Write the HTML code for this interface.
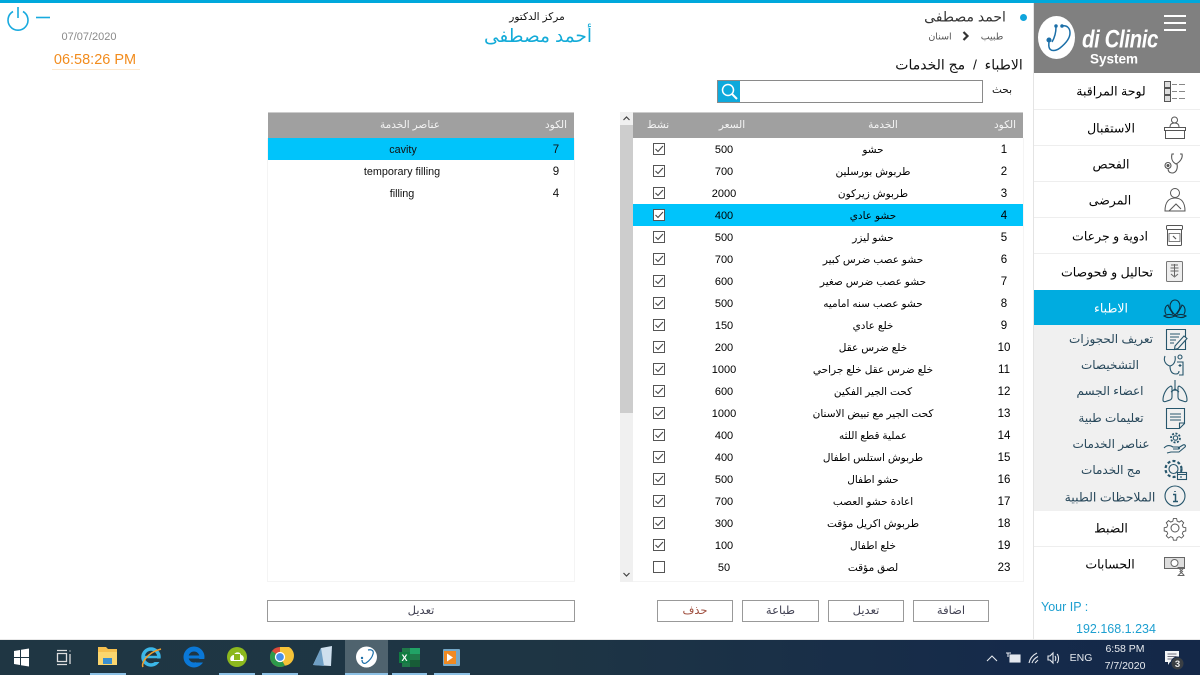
<!DOCTYPE html>
<html lang="ar"><head><meta charset="utf-8"><title>di Clinic System</title>
<style>
html,body{margin:0;padding:0;width:1200px;height:675px;overflow:hidden;background:#fff;font-family:"Liberation Sans","DejaVu Sans",sans-serif;color:#111}
.a{position:absolute}
.t{position:absolute;white-space:nowrap;text-align:center;transform:translate(-50%,-50%)}
.hd{background:#a0a0a0;color:#f4f4f4;font-size:10.5px}
.r{position:absolute;left:633px;width:390px;height:22px;font-size:10.5px;color:#000}
.r span{position:absolute;top:12px;transform:translate(-50%,-50%);white-space:nowrap}
.r .c{left:371px;font-size:11.500px}.r .n{left:240px}.r .p{left:91px;font-size:11px}
.r i{position:absolute;left:20px;top:5px;width:10px;height:10px;border:1px solid #555;background:#fff;box-sizing:content-box}
.r i svg{position:absolute;left:0;top:0}
.btn{position:absolute;top:600px;height:22px;border:1.500px solid #999;background:#fff;font-size:11.500px;text-align:center;line-height:20px;color:#445;box-sizing:border-box}
.m{font-size:12.500px;color:#000}
.s{font-size:12px;color:#27475a}
.sl{position:absolute;left:1034px;width:166px;height:1px;background:#eee}
</style></head><body>
<div class="a" style="left:0;top:0;width:1200px;height:3px;background:#00a8dc"></div>
<div class="a" style="left:1033px;top:3px;width:1px;height:637px;background:#e4e4e4"></div>

<svg class="a" style="left:5px;top:6px" width="46" height="26" fill="none" stroke="#18aade" stroke-width="1.600"><path d="M8 5.500a10 10 0 1 0 10 0"/><path d="M13 1v11"/><path d="M31 11.500h14"/></svg>
<div class="t" style="left:89px;top:37px;font-size:11px;color:#8a8a8a">07/07/2020</div>
<div class="t" style="left:95px;top:60px;font-size:14.500px;color:#f28c1e">06:58:26 PM</div>
<div class="a" style="left:52px;top:69px;width:88px;height:1px;background:#fde9cf"></div>

<div class="t" style="left:537px;top:17px;font-size:10.500px;color:#111" dir="rtl">مركز الدكتور</div>
<div class="t" style="left:538px;top:36px;font-size:18.500px;color:#13abd8" dir="rtl">أحمد مصطفى</div>
<div class="a" style="left:1020px;top:14px;width:7px;height:7px;border-radius:50%;background:#0fa5dc"></div>
<div class="t" style="left:965px;top:17px;font-size:14px;color:#333" dir="rtl">احمد مصطفى</div>
<div class="t" style="left:992px;top:37px;font-size:9.500px;color:#555" dir="rtl">طبيب</div>
<svg class="a" style="left:961px;top:31px" width="10" height="10" fill="none" stroke="#333" stroke-width="2.200"><path d="M2.500 1l4 4-4 4"/></svg>
<div class="t" style="left:940px;top:37px;font-size:9.500px;color:#555" dir="rtl">اسنان</div>
<div class="t" style="left:959px;top:65px;font-size:14px;color:#111" dir="rtl">الاطباء &nbsp;/&nbsp; مج الخدمات</div>

<div class="a" style="left:717px;top:80px;width:266px;height:23px;border:1px solid #8a8a8a;box-sizing:border-box;background:#fff"></div>
<div class="a" style="left:718px;top:81px;width:22px;height:21px;background:#0ea9dc"></div>
<svg class="a" style="left:718px;top:81px" width="22" height="21" fill="none" stroke="#fff" stroke-width="1.500"><circle cx="10" cy="9" r="5.500"/><path d="M14 13l5 5" stroke-width="2"/></svg>
<div class="t" style="left:1002px;top:90px;font-size:10.500px" dir="rtl">بحث</div>

<!-- left table -->
<div class="a hd" style="left:268px;top:112px;width:306px;height:26px;border-top:1px solid #ccc;box-sizing:border-box"></div>
<div class="t hd" style="left:410px;top:125px;background:none" dir="rtl">عناصر الخدمة</div>
<div class="t hd" style="left:556px;top:125px;background:none" dir="rtl">الكود</div>
<div class="a" style="left:268px;top:138px;width:306px;height:22px;background:#00c4fb"></div>
<div class="t" style="left:403px;top:150px;font-size:10.800px">cavity</div><div class="t" style="left:556px;top:150px;font-size:11.500px">7</div>
<div class="t" style="left:402px;top:172px;font-size:10.800px">temporary filling</div><div class="t" style="left:556px;top:172px;font-size:11.500px">9</div>
<div class="t" style="left:402px;top:194px;font-size:10.800px">filling</div><div class="t" style="left:556px;top:194px;font-size:11.500px">4</div>
<div class="a" style="left:267px;top:138px;width:1px;height:444px;background:#f4f4f4"></div>
<div class="a" style="left:574px;top:138px;width:1px;height:444px;background:#f4f4f4"></div>
<div class="a" style="left:267px;top:581px;width:308px;height:1px;background:#f4f4f4"></div>

<!-- scrollbar -->
<div class="a" style="left:620px;top:112px;width:13px;height:470px;background:#f0f0f0"></div>
<div class="a" style="left:620px;top:125px;width:13px;height:288px;background:#cdcdcd"></div>
<svg class="a" style="left:620px;top:112px" width="13" height="470" fill="none" stroke="#444" stroke-width="1.200"><path d="M3.500 8L6.500 5l3 3"/><path d="M3.500 461l3 3 3-3"/></svg>

<!-- right table -->
<div class="a hd" style="left:633px;top:112px;width:390px;height:26px;border-top:1px solid #ccc;box-sizing:border-box"></div>
<div class="t hd" style="left:658px;top:125px;background:none" dir="rtl">نشط</div>
<div class="t hd" style="left:732px;top:125px;background:none" dir="rtl">السعر</div>
<div class="t hd" style="left:883px;top:125px;background:none" dir="rtl">الخدمة</div>
<div class="t hd" style="left:1005px;top:125px;background:none" dir="rtl">الكود</div>
<div class="a" style="left:633px;top:204px;width:390px;height:22px;background:#00c4fb"></div>
<div class="a" style="left:1023px;top:138px;width:1px;height:444px;background:#f4f4f4"></div>
<div class="a" style="left:633px;top:581px;width:391px;height:1px;background:#f4f4f4"></div>

<div class="r" style="top:138px"><i><svg width="10" height="10" fill="none" stroke="#444" stroke-width="1.100"><path d="M1.500 5l2.500 2.500L9 2"/></svg></i><span class="p">500</span><span class="n" dir="rtl">حشو</span><span class="c">1</span></div>
<div class="r" style="top:160px"><i><svg width="10" height="10" fill="none" stroke="#444" stroke-width="1.100"><path d="M1.500 5l2.500 2.500L9 2"/></svg></i><span class="p">700</span><span class="n" dir="rtl">طربوش بورسلين</span><span class="c">2</span></div>
<div class="r" style="top:182px"><i><svg width="10" height="10" fill="none" stroke="#444" stroke-width="1.100"><path d="M1.500 5l2.500 2.500L9 2"/></svg></i><span class="p">2000</span><span class="n" dir="rtl">طربوش زيركون</span><span class="c">3</span></div>
<div class="r" style="top:204px"><i><svg width="10" height="10" fill="none" stroke="#444" stroke-width="1.100"><path d="M1.500 5l2.500 2.500L9 2"/></svg></i><span class="p">400</span><span class="n" dir="rtl">حشو عادي</span><span class="c">4</span></div>
<div class="r" style="top:226px"><i><svg width="10" height="10" fill="none" stroke="#444" stroke-width="1.100"><path d="M1.500 5l2.500 2.500L9 2"/></svg></i><span class="p">500</span><span class="n" dir="rtl">حشو ليزر</span><span class="c">5</span></div>
<div class="r" style="top:248px"><i><svg width="10" height="10" fill="none" stroke="#444" stroke-width="1.100"><path d="M1.500 5l2.500 2.500L9 2"/></svg></i><span class="p">700</span><span class="n" dir="rtl">حشو عصب ضرس كبير</span><span class="c">6</span></div>
<div class="r" style="top:270px"><i><svg width="10" height="10" fill="none" stroke="#444" stroke-width="1.100"><path d="M1.500 5l2.500 2.500L9 2"/></svg></i><span class="p">600</span><span class="n" dir="rtl">حشو عصب ضرس صغير</span><span class="c">7</span></div>
<div class="r" style="top:292px"><i><svg width="10" height="10" fill="none" stroke="#444" stroke-width="1.100"><path d="M1.500 5l2.500 2.500L9 2"/></svg></i><span class="p">500</span><span class="n" dir="rtl">حشو عصب سنه اماميه</span><span class="c">8</span></div>
<div class="r" style="top:314px"><i><svg width="10" height="10" fill="none" stroke="#444" stroke-width="1.100"><path d="M1.500 5l2.500 2.500L9 2"/></svg></i><span class="p">150</span><span class="n" dir="rtl">خلع عادي</span><span class="c">9</span></div>
<div class="r" style="top:336px"><i><svg width="10" height="10" fill="none" stroke="#444" stroke-width="1.100"><path d="M1.500 5l2.500 2.500L9 2"/></svg></i><span class="p">200</span><span class="n" dir="rtl">خلع ضرس عقل</span><span class="c">10</span></div>
<div class="r" style="top:358px"><i><svg width="10" height="10" fill="none" stroke="#444" stroke-width="1.100"><path d="M1.500 5l2.500 2.500L9 2"/></svg></i><span class="p">1000</span><span class="n" dir="rtl">خلع ضرس عقل خلع جراحي</span><span class="c">11</span></div>
<div class="r" style="top:380px"><i><svg width="10" height="10" fill="none" stroke="#444" stroke-width="1.100"><path d="M1.500 5l2.500 2.500L9 2"/></svg></i><span class="p">600</span><span class="n" dir="rtl">كحت الجير الفكين</span><span class="c">12</span></div>
<div class="r" style="top:402px"><i><svg width="10" height="10" fill="none" stroke="#444" stroke-width="1.100"><path d="M1.500 5l2.500 2.500L9 2"/></svg></i><span class="p">1000</span><span class="n" dir="rtl">كحت الجير مع تبيض الاسنان</span><span class="c">13</span></div>
<div class="r" style="top:424px"><i><svg width="10" height="10" fill="none" stroke="#444" stroke-width="1.100"><path d="M1.500 5l2.500 2.500L9 2"/></svg></i><span class="p">400</span><span class="n" dir="rtl">عملية قطع اللثه</span><span class="c">14</span></div>
<div class="r" style="top:446px"><i><svg width="10" height="10" fill="none" stroke="#444" stroke-width="1.100"><path d="M1.500 5l2.500 2.500L9 2"/></svg></i><span class="p">400</span><span class="n" dir="rtl">طربوش استلس اطفال</span><span class="c">15</span></div>
<div class="r" style="top:468px"><i><svg width="10" height="10" fill="none" stroke="#444" stroke-width="1.100"><path d="M1.500 5l2.500 2.500L9 2"/></svg></i><span class="p">500</span><span class="n" dir="rtl">حشو اطفال</span><span class="c">16</span></div>
<div class="r" style="top:490px"><i><svg width="10" height="10" fill="none" stroke="#444" stroke-width="1.100"><path d="M1.500 5l2.500 2.500L9 2"/></svg></i><span class="p">700</span><span class="n" dir="rtl">اعادة حشو العصب</span><span class="c">17</span></div>
<div class="r" style="top:512px"><i><svg width="10" height="10" fill="none" stroke="#444" stroke-width="1.100"><path d="M1.500 5l2.500 2.500L9 2"/></svg></i><span class="p">300</span><span class="n" dir="rtl">طربوش اكريل مؤقت</span><span class="c">18</span></div>
<div class="r" style="top:534px"><i><svg width="10" height="10" fill="none" stroke="#444" stroke-width="1.100"><path d="M1.500 5l2.500 2.500L9 2"/></svg></i><span class="p">100</span><span class="n" dir="rtl">خلع اطفال</span><span class="c">19</span></div>
<div class="r" style="top:556px"><i></i><span class="p">50</span><span class="n" dir="rtl">لصق مؤقت</span><span class="c">23</span></div>

<!-- buttons -->
<div class="btn" style="left:267px;width:308px" dir="rtl">تعديل</div>
<div class="btn" style="left:657px;width:76px;color:#a05040" dir="rtl">حذف</div>
<div class="btn" style="left:742px;width:77px" dir="rtl">طباعة</div>
<div class="btn" style="left:828px;width:76px" dir="rtl">تعديل</div>
<div class="btn" style="left:913px;width:76px" dir="rtl">اضافة</div>

<!-- sidebar -->
<div class="a" style="left:1034px;top:3px;width:166px;height:70px;background:#808080"></div>
<div class="a" style="left:1038px;top:16px;width:37px;height:43px;border-radius:50%;background:#fff"></div>
<svg class="a" style="left:1038px;top:16px" width="37" height="43" fill="none" stroke="#1b6fa8" stroke-width="1.500"><path d="M24 10c5-1 8 2 8 7 0 6-5 11-10 15-4 3-10 4-11-1-.5-2 0-4 0-6"/><path d="M18 11c0 5-1 10-4 15"/><circle cx="11" cy="24" r="1.800" fill="#1b6fa8"/><circle cx="18" cy="10" r="1" fill="#1b6fa8"/><circle cx="24" cy="10" r="1" fill="#1b6fa8"/></svg>
<div class="t" style="left:1120px;top:40px;font-size:25px;font-weight:bold;font-style:italic;color:#fff;letter-spacing:-.5px;transform:translate(-50%,-50%) scaleX(.82)">di Clinic</div>
<div class="t" style="left:1114px;top:59px;font-size:13.500px;font-weight:bold;color:#fff">System</div>
<div class="a" style="left:1164px;top:15px;width:22px;height:2px;background:#fff"></div>
<div class="a" style="left:1164px;top:22px;width:22px;height:2px;background:#fff"></div>
<div class="a" style="left:1164px;top:29px;width:22px;height:2px;background:#fff"></div>

<div class="t m" style="left:1111px;top:91px" dir="rtl">لوحة المراقبة</div>
<div class="sl" style="top:109px"></div>
<div class="t m" style="left:1111px;top:128px" dir="rtl">الاستقبال</div>
<div class="sl" style="top:145px"></div>
<div class="t m" style="left:1111px;top:164px" dir="rtl">الفحص</div>
<div class="sl" style="top:181px"></div>
<div class="t m" style="left:1110px;top:200px" dir="rtl">المرضى</div>
<div class="sl" style="top:217px"></div>
<div class="t m" style="left:1110px;top:236px" dir="rtl">ادوية و جرعات</div>
<div class="sl" style="top:253px"></div>
<div class="t m" style="left:1107px;top:272px" dir="rtl">تحاليل و فحوصات</div>
<div class="a" style="left:1034px;top:290px;width:166px;height:35px;background:#00ace0"></div>
<div class="t m" style="left:1111px;top:308px;color:#fff" dir="rtl">الاطباء</div>
<div class="a" style="left:1034px;top:325px;width:166px;height:186px;background:#f0f0f0"></div>
<div class="t s" style="left:1111px;top:339px" dir="rtl">تعريف الحجوزات</div>
<div class="t s" style="left:1110px;top:365px" dir="rtl">التشخيصات</div>
<div class="t s" style="left:1110px;top:391px" dir="rtl">اعضاء الجسم</div>
<div class="t s" style="left:1111px;top:418px" dir="rtl">تعليمات طبية</div>
<div class="t s" style="left:1111px;top:444px" dir="rtl">عناصر الخدمات</div>
<div class="t s" style="left:1111px;top:470px" dir="rtl">مج الخدمات</div>
<div class="t s" style="left:1110px;top:497px;font-size:12.500px" dir="rtl">الملاحظات الطبية</div>
<div class="t m" style="left:1111px;top:528px" dir="rtl">الضبط</div>
<div class="sl" style="top:546px"></div>
<div class="t m" style="left:1110px;top:564px" dir="rtl">الحسابات</div>
<div class="a" style="left:1041px;top:600px;font-size:12.500px;color:#1d9fd0">Your IP :</div>
<div class="t" style="left:1116px;top:629px;font-size:12.500px;color:#1d9fd0">192.168.1.234</div>

<!-- sidebar icons -->
<svg class="a" style="left:1160px;top:78px" width="30" height="26" fill="none" stroke="#555" stroke-width="1"><rect x="4.500" y="3.500" width="6" height="6" fill="#ddd"/><rect x="4.500" y="10.500" width="6" height="6" fill="#ddd"/><rect x="4.500" y="17.500" width="6" height="6" fill="#ddd"/><path d="M12 6.500h5M19 6.500h6M12 13.500h5M19 13.500h6M12 20.500h5M19 20.500h6" stroke="#888"/></svg>
<svg class="a" style="left:1160px;top:114px" width="30" height="26" fill="none" stroke="#555" stroke-width="1"><circle cx="14.500" cy="6" r="3"/><path d="M10 13c0-3 2-4 4.500-4s4.500 1 4.500 4"/><path d="M4.500 13.500h21v3h-21zM5.500 16.500v8h19v-8"/></svg>
<svg class="a" style="left:1160px;top:150px" width="30" height="26" fill="none" stroke="#555" stroke-width="1.100"><path d="M14 4h-2c-1 4 0 8 4 10 4-2 7-6 6-10h-2"/><path d="M17 14c1 5-1 9-5 9-3 0-4-2-4-5"/><circle cx="8" cy="15.500" r="3"/><circle cx="8" cy="15.500" r="1" fill="#555"/></svg>
<svg class="a" style="left:1160px;top:186px" width="30" height="26" fill="none" stroke="#555" stroke-width="1"><circle cx="15" cy="7" r="4.500"/><path d="M5 25c0-9 4-13 10-13s10 4 10 13zM9 25l7-7 5 5"/></svg>
<svg class="a" style="left:1160px;top:222px" width="30" height="26" fill="none" stroke="#555" stroke-width="1"><rect x="6.500" y="3.500" width="16" height="4" rx="1"/><rect x="7.500" y="7.500" width="14" height="16" rx="1"/><path d="M9 11.500h11v8H9z" stroke-width=".8"/><path d="M13 14l3 3" stroke-width="1.200"/></svg>
<svg class="a" style="left:1160px;top:258px" width="30" height="26" fill="none" stroke="#777" stroke-width="1"><rect x="6.500" y="3.500" width="16" height="20" rx="1" fill="#eee"/><path d="M11 7h7M10.500 10h8M10.500 13h8M11 16l3.500 3 3.500-3M14.500 6v12" stroke="#666"/></svg>
<svg class="a" style="left:1160px;top:295px" width="30" height="26" fill="none" stroke="#0f2f40" stroke-width="1.100"><path d="M6 19c-2-3-1-8 2-9 1 3 3 6 5 9"/><path d="M24 19c2-3 1-8-2-9-1 3-3 6-5 9"/><path d="M15 5c-3 0-5 3-5 6 0 4 3 7 5 9 2-2 5-5 5-9 0-3-2-6-5-6z"/><path d="M4 21c3-2 7-2 11 0 4-2 8-2 11 0-3 2-7 2-11 0-4 2-8 2-11 0z"/></svg>
<svg class="a" style="left:1160px;top:326px" width="30" height="26" fill="none" stroke="#27566c" stroke-width="1.100"><path d="M6.500 3.500h19v20h-19z"/><path d="M10 8h10M10 11h9M10 14h6M10 17h4"/><path d="M15 20l9-10 3 2.500-9 10-3.500 1z" fill="#f0f0f0"/></svg>
<svg class="a" style="left:1160px;top:352px" width="30" height="26" fill="none" stroke="#27566c" stroke-width="1.100"><path d="M5 4c-2 5 1 9 5 10 4-1 6-5 5-10"/><path d="M10 14c0 5 2 8 6 8 2 0 3-1 3-3"/><circle cx="20" cy="5" r="2"/><path d="M17 10h6v13h-4M20 12v3M18.500 13.500h3"/></svg>
<svg class="a" style="left:1160px;top:378px" width="30" height="26" fill="none" stroke="#27566c" stroke-width="1.100"><path d="M15 2v11M15 11l-4 3M15 11l4 3"/><path d="M11 8c-5 2-8 9-8 14 0 2 2 2 4 1 3-1 5-1 5-4V9zM19 8c5 2 8 9 8 14 0 2-2 2-4 1-3-1-5-1-5-4V9z"/></svg>
<svg class="a" style="left:1160px;top:404px" width="30" height="26" fill="none" stroke="#27566c" stroke-width="1.100"><path d="M6.500 4.500h18v15l-5 5h-13z"/><path d="M10 10h11M10 13h11M10 16h11M19.500 24v-5h5"/></svg>
<svg class="a" style="left:1160px;top:430px" width="30" height="26" fill="none" stroke="#27566c" stroke-width="1.100"><circle cx="15.500" cy="8" r="2.200"/><circle cx="15.500" cy="8" r="4.500" stroke-dasharray="2 1.500" stroke-width="1.800"/><path d="M4 18c3-3 6-3 9-1h5c2 0 2 2 0 2h-5M18 18l5-3c2-1 3 1 2 2l-6 5h-8l-4 1"/></svg>
<svg class="a" style="left:1160px;top:456px" width="30" height="26" fill="none" stroke="#27566c" stroke-width="1.100"><circle cx="13.500" cy="13" r="4.500"/><circle cx="13.500" cy="13" r="8" stroke-dasharray="3 2.200" stroke-width="2.200"/><rect x="17.500" y="16.500" width="9" height="7" fill="#f0f0f0"/><path d="M17.500 18.500h9M21 20v2"/></svg>
<svg class="a" style="left:1160px;top:483px" width="30" height="26" fill="none" stroke="#27566c" stroke-width="1.100"><circle cx="15" cy="13" r="10"/><path d="M15 8v.8" stroke-width="2"/><path d="M13 11.500h2.500v6.500M13 18.500h5" stroke-width="1.500"/></svg>
<svg class="a" style="left:1160px;top:515px" width="30" height="26" fill="none" stroke="#555" stroke-width="1"><circle cx="15" cy="13" r="4"/><path d="M13.200 2.500h3.600l.6 2.900 2.300 1 2.500-1.600 2.500 2.500-1.600 2.500 1 2.300 2.900.6v3.600l-2.900.6-1 2.300 1.600 2.500-2.500 2.500-2.500-1.600-2.300 1-.6 2.900h-3.600l-.6-2.900-2.300-1-2.500 1.600-2.500-2.500 1.600-2.500-1-2.300-2.900-.6v-3.600l2.900-.6 1-2.300-1.600-2.500 2.500-2.500 2.500 1.600 2.300-1z" transform="translate(1.500 1.300) scale(.9)"/></svg>
<svg class="a" style="left:1160px;top:551px" width="30" height="26" fill="none" stroke="#666" stroke-width="1"><rect x="4.500" y="6.500" width="20" height="11" fill="#ddd"/><circle cx="14.500" cy="12" r="3.500" fill="#fff"/><path d="M17.500 16.500h7M18.500 17l4 3.500-4 3.500M24 17l-4 3.500 4 3.500M17.500 24.500h7"/></svg>

<!-- taskbar -->
<div class="a" style="left:0;top:639px;width:1200px;height:1px;background:#e8e8e8"></div>
<div class="a" style="left:0;top:640px;width:1200px;height:35px;background:linear-gradient(90deg,#1f3643 0%,#1e3544 45%,#152a4a 85%,#142848 100%)"></div>
<div class="a" style="left:345px;top:640px;width:43px;height:35px;background:#4f636e"></div>
<div class="a" style="left:90px;top:673px;width:36px;height:2px;background:#8cc0e4"></div>
<div class="a" style="left:219px;top:673px;width:36px;height:2px;background:#8cc0e4"></div>
<div class="a" style="left:262px;top:673px;width:36px;height:2px;background:#8cc0e4"></div>
<div class="a" style="left:345px;top:673px;width:43px;height:2px;background:#8cc0e4"></div>
<div class="a" style="left:392px;top:673px;width:35px;height:2px;background:#8cc0e4"></div>
<div class="a" style="left:434px;top:673px;width:36px;height:2px;background:#8cc0e4"></div>
<svg class="a" style="left:0;top:637px" width="500" height="35">
<path d="M14 14l6-1v7h-6zM21 12.700l8-1.200V20h-8zM14 21h6v7l-6-1zM21 21h8v8.500l-8-1.200z" fill="#fff"/>
<path d="M57 13.500h10M57 27.500h10M57.500 16.500h9v8h-9zM70 13.500v1M70 17v10" fill="none" stroke="#ddd" stroke-width="1.300"/>
<path d="M98 10h8l2 2h9v16H98z" fill="#f6c04f"/><path d="M98 15h19v13H98z" fill="#fbd66e"/><rect x="103" y="21" width="9" height="6" fill="#3a8fd0"/>
<circle cx="151" cy="20" r="8" fill="none" stroke="#3bb7e8" stroke-width="3.500"/><path d="M144 20h14" stroke="#3bb7e8" stroke-width="2.500"/><path d="M143 30c-2-3 3-14 18-18" fill="none" stroke="#f0a030" stroke-width="1.500"/><rect x="152" y="21.500" width="9" height="3.500" fill="#1f3643"/>
<circle cx="194" cy="20" r="8" fill="none" stroke="#0a78d7" stroke-width="5"/><path d="M188 20h14" stroke="#0a78d7" stroke-width="3"/><rect x="196" y="22" width="9" height="3.500" fill="#1f3643"/>
<circle cx="237" cy="20" r="10" fill="#8cb81e"/><path d="M231 24h12c2-3 0-6-2-6 0-3-6-4-7 0-3 0-5 4-3 6z" fill="#fff"/><rect x="234" y="17" width="6" height="6" fill="#8cb81e"/>
<circle cx="280" cy="20" r="10" fill="#dd4b39"/><path d="M280 20l-8.700 5A10 10 0 0 0 285 28.600z" fill="#2c9a4b"/><path d="M280 10h9a10 10 0 0 1-4 18.600L280 20z" fill="#f6c338"/><path d="M271.300 25A10 10 0 0 1 272 14l8 6z" fill="#2c9a4b"/><circle cx="280" cy="20" r="4.500" fill="#4a8fe8" stroke="#fff" stroke-width="1.300"/>
<path d="M313 28l8-17 11-2-1 20z" fill="#cfe0ee"/><path d="M313 28l8-17 3 18z" fill="#6f9fc4"/>
<circle cx="366.500" cy="20" r="10.500" fill="#fff"/><path d="M368 13c4-1 6 1 5 4-1 4-4 7-7 9-2 1-4 0-4-3" fill="none" stroke="#1b6fa8" stroke-width="1.200"/><circle cx="362" cy="21" r="1.200" fill="#1b6fa8"/>
<rect x="402" y="11" width="18" height="19" fill="#1f7a4a"/><rect x="410" y="11" width="10" height="6" fill="#21a366"/><rect x="410" y="23" width="10" height="7" fill="#185c37"/><rect x="399" y="15" width="11" height="11" fill="#107c41"/><text x="404.500" y="24" font-size="9" font-weight="bold" fill="#fff" text-anchor="middle" font-family="Liberation Sans">X</text>
<rect x="443" y="12" width="17" height="17" rx="1" fill="#74a8c8"/><rect x="444" y="14" width="12" height="13" fill="#f08a22"/><path d="M447 16.500l6 4-6 4z" fill="#fff"/>
</svg>
<svg class="a" style="left:985px;top:650px" width="80" height="16" fill="none" stroke="#e4e8ee" stroke-width="1.100"><path d="M2 11l5-5 5 5"/><rect x="25" y="5" width="10" height="7" fill="#e4e8ee"/><path d="M21 3h5M23 3v4"/><path d="M44 13c1-5 4-8 8-10M47 13c1-3 3-5 6-6.500M50 13l3-3"/><path d="M63 6h2l3-3v10l-3-3h-2z"/><path d="M70 6c1 1 1 4 0 5M72 4c2 2 2 7 0 9"/></svg>
<div class="t" style="left:1081px;top:658px;font-size:10.500px;color:#e4e8ee">ENG</div>
<div class="t" style="left:1125px;top:649px;font-size:10.500px;color:#e8ecf0">6:58 PM</div>
<div class="t" style="left:1125px;top:666px;font-size:10.500px;color:#e8ecf0">7/7/2020</div>
<svg class="a" style="left:1163px;top:649px" width="26" height="22"><path d="M2 2h14v11H7l-2 3v-3H2z" fill="#f4f6f8"/><path d="M4.500 5h9M4.500 7.500h9M4.500 10h6" stroke="#445" stroke-width=".8"/><circle cx="14.500" cy="14.500" r="6.500" fill="#3a3f44" stroke="#15294a"/><text x="14.500" y="18" font-size="9.500" font-weight="bold" fill="#eee" text-anchor="middle" font-family="Liberation Sans">3</text></svg>
</body></html>
